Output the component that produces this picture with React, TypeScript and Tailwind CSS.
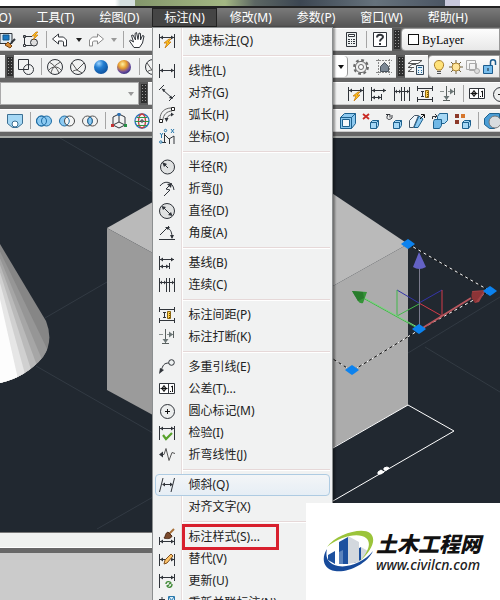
import React from "react";

const K = "#30343a";

const glyphs: Record<string, React.ReactNode> = {
  quick: (
    <>
      <path d="M.5 1v14M15.500 1v14M1 4.500h14" />
      <path d="M1 4.500l3-2v4zM15 4.500l-3-2v4z" fill={K} stroke="none" />
      <path d="M10 6l-5 4h3l-2 5 6-6H9l3-3z" fill="#ffc21a" stroke="#c87a10" strokeWidth=".8" />
    </>
  ),
  linear: (
    <>
      <path d="M.5 1v14M15.500 1v14M1 7.500h14" />
      <path d="M1 7.500l3-2v4zM15 7.500l-3-2v4z" fill={K} stroke="none" />
    </>
  ),
  aligned: (
    <>
      <path d="M4 5l9 8M0 5l5-5M10 16l6-6" />
      <path d="M2.500 3.500l4 1-2 2.500zM14 14l-4-1 2-2.500z" fill={K} stroke="none" />
    </>
  ),
  arc: (
    <>
      <path d="M4 13C4 8 8 4 13 4M1 12C1 5 6 1 12 1" stroke="#666" />
      <path d="M7.500 14c0-4 2-6 6-6.500" stroke="#555" />
      <path d="M.5 12.500h3v3h-3zM12.500 .5h3v3h-3z" fill="#fff" stroke="#222" />
      <path d="M5.500 11h4l-2 4zM12 5.500v4l3-2z" fill={K} stroke="none" />
    </>
  ),
  ordinate: (
    <>
      <path d="M5.500 4v10M3 13.500h4M6 6l4 4 5-3v8M10.500 10v5" />
      <path d="M1 4l1.500 2L4 4M2.500 6v3M12 0l3 4M15 0l-3 4" stroke="#2879ad" />
      <circle cx="6.500" cy="1.500" r="1.200" stroke="#2879ad" />
      <circle cx="1.800" cy="13" r="1.200" stroke="#2879ad" />
    </>
  ),
  radius: (
    <>
      <circle cx="8.500" cy="8" r="7" fill="#e0e2e2" />
      <path d="M9 9L5 5" />
      <path d="M3 3l5 2-3 3z" fill={K} stroke="none" />
    </>
  ),
  jogged: (
    <>
      <path d="M1 5C5-1 14 0 15 9M12 3L7 8l4 1-6 6" />
      <path d="M13 2l-1 5-4-4z" fill={K} stroke="none" />
    </>
  ),
  diameter: (
    <>
      <circle cx="8" cy="8" r="7.500" fill="#e0e2e2" />
      <path d="M4 4l8 8" />
      <path d="M2.500 3l4.500 1-3 3zM13.500 13l-4.500-1 3-3z" fill={K} stroke="none" />
    </>
  ),
  angular: (
    <>
      <path d="M0 14.500h16M1 10L10 1M8 3c4 1 5 5 5 10" />
      <path d="M6 2l5 0-2 3zM13 14l-2-4h4z" fill={K} stroke="none" />
    </>
  ),
  baseline: (
    <>
      <path d="M.5 1v14M10.500 8v6M1 4.500h14M1 11.500h9" />
      <path d="M1 4.500l3-2v4zM15 4.500l-3-2v4zM1 11.500l3-2v4zM10 11.500l-3-2v4z" fill={K} stroke="none" />
    </>
  ),
  cont: (
    <>
      <path d="M.5 1v14M7.500 1v14M10.500 1v14M15.500 1v14M1 5.500h14" />
      <path d="M1 5.500l2-2v4zM7 5.500l-2-2v4zM15 5.500l-2-2v4z" fill={K} stroke="none" />
    </>
  ),
  spacing: (
    <>
      <path d="M.5 0v5M15.500 0v5M.5 11v5M15.500 11v5M1 2.500h14M1 13.500h14M4 5.500h3M4 10.500h3M5.500 6v5" />
      <path d="M8.500 4.500h3v7h-3z" fill="#ffd04a" stroke="#8a6510" />
      <path d="M10 6.500h1M10 8.500h1M10 10.500h1" stroke="#704c00" />
    </>
  ),
  breakDim: (
    <>
      <path d="M0 5.500h4M8 5.500h7" stroke="#89908f" />
      <path d="M6.500 0v14M3 14.500h7M14.500 2v7" stroke="#59605f" />
      <path d="M14 5.500l-4-3v6zM6.500 14l-3-4h6z" fill="#6b7676" stroke="none" />
    </>
  ),
  leader: (
    <>
      <path d="M2 12C4 6 5 4 10 4" />
      <circle cx="12.500" cy="3.500" r="2.800" fill="#eef2f2" />
      <path d="M0 15l1-6 4 2z" fill={K} stroke="none" />
    </>
  ),
  tolerance: (
    <>
      <path d="M.5 2.500h15v10H.5zM9.500 3v9" fill="#fff" />
      <circle cx="5" cy="7.500" r="2" stroke="#111" />
      <path d="M5 4v7M1.500 7.500h7M12 6l1.500-1v6M11 10.500h1" stroke="#111" />
    </>
  ),
  center: (
    <>
      <circle cx="8.500" cy="8.500" r="7" fill="#eceeee" />
      <path d="M6 8.500h5M8.500 6v5" stroke="#111" />
    </>
  ),
  inspect: (
    <>
      <path d="M.5 1v14M15.500 1v14M1 3.500h14" />
      <path d="M1 3.500l3-2v4zM15 3.500l-3-2v4z" fill={K} stroke="none" />
      <path d="M4 10l3 4 6-6" stroke="#58a12c" strokeWidth="2.200" />
    </>
  ),
  jogLine: (
    <>
      <path d="M3 7.500h2l2-6 3 12 3-8 3 1" stroke="#555" />
      <path d="M0 7.500l4-3v6z" fill={K} stroke="none" />
    </>
  ),
  oblique: (
    <>
      <path d="M4 1L.5 15M15.500 1L12 15M4 7.500h9" />
      <path d="M3 7.500l3-2v4zM14 7.500l-3-2v4z" fill={K} stroke="none" />
    </>
  ),
  style: (
    <>
      <path d="M.5 8v8M15.500 8v8M1 12.500h14" />
      <path d="M1 12.500l3-2v4zM15 12.500l-3-2v4z" fill={K} stroke="none" />
      <path d="M15 0l-5 5" stroke="#a87038" strokeWidth="2" />
      <path d="M9 3l4 4c-1 3-5 3-8 2 2-2 1-5 4-6z" fill="#7b4a2c" stroke="#4c2b18" />
    </>
  ),
  override: (
    <>
      <path d="M.5 3v12M15.500 3v12M1 8.500h5M13 8.500h2" />
      <path d="M1 8.500l3-2v4zM15 8.500l-3-2v4z" fill={K} stroke="none" />
      <path d="M12 3l2 2-6 7-3 1 1-4z" fill="#ffc66b" stroke="#805020" />
    </>
  ),
  update: (
    <>
      <path d="M.5 1v14M15.500 1v7M1 4.500h14" />
      <path d="M1 4.500l3-2v4zM15 4.500l-3-2v4z" fill={K} stroke="none" />
      <path d="M7 11c0-3 4-3 5-1l-2 1M13 11c0 4-4 4-5 2l2-1" stroke="#438c3a" strokeWidth="1.400" />
    </>
  ),
  reassoc: (
    <>
      <path d="M0 4.500h6M3 2v5" />
      <path d="M9.500 1.500h6v8h-6zM10 2l5 7M15 2l-5 7" fill="#d9ecf8" stroke="#2879ad" />
    </>
  ),
  saveBrush: (
    <>
      <path d="M0 1.500h12v10H0z" fill="#dce9f2" />
      <path d="M3 3h6v5H3z" fill="#1979c4" stroke="#145785" />
      <path d="M15 7l-4 4" strokeWidth="2" />
      <path d="M8 10l4 4-2 2-5-3z" fill="#d78b35" stroke="#774616" />
    </>
  ),
  shapeFlash: (
    <>
      <path d="M1.500 4.500H9M1.500 5v7M2 13.500h7M.5 3.500h2v2h-2zM.5 12.500h2v2h-2z" />
      <circle cx="11" cy="10.500" r="3.500" fill="#ddd" />
      <path d="M13 0L9 4h3l-2 4 5-5h-3l3-3z" fill="#ffc21a" stroke="#c87a10" strokeWidth=".7" />
    </>
  ),
  undo: <path d="M.5 7l6-5v3h5l3 3v6h-3v-4l-1-1h-4v3z" fill="#fff" />,
  redo: <path d="M15.500 7l-6-5v3h-5l-3 3v6h3v-4l1-1h4v3z" fill="#fff" stroke="#8b8b8b" />,
  hand: (
    <path
      d="M5 15.500L.5 9 1.500 8l3 2-2-6.500L4 3l2.500 5L6 1.500 7.500.5l1.500 7 1-6.500 1.500.5V8l2-4.500 1.500.5-1.500 7-3 4.500z"
      fill="#fff"
    />
  ),
  calc: (
    <>
      <path d="M3.500.5h10v14h-10z" fill="#eef2f2" />
      <path d="M5.500 2.500h6v2h-6z" fill="#fff" />
      <path d="M5 7.500h2M8 7.500h1M10 7.500h2M5 9.500h2M8 9.500h1M10 9.500h2M5 11.500h2M8 11.500h1M10 11.500h2" />
    </>
  ),
  help: (
    <>
      <path d="M1.500.5h13v14h-13z" fill="#fff" />
      <path d="M5 5.500c0-3.500 6-3.500 6-.5 0 2-3 1.500-3 4.500M8 11v2" strokeWidth="2" />
    </>
  ),
  overlap: (
    <>
      <path d="M.5.5h10v10H.5z" />
      <circle cx="10.500" cy="10.500" r="5" />
    </>
  ),
  sphereX: (
    <>
      <circle cx="8" cy="8" r="7.500" />
      <path d="M2 3c4 2 8 6 10 11M14 3C9 5 5 9 4 14M2 11c3-4 9-4 12 0" stroke="#555" />
    </>
  ),
  sphereV: (
    <>
      <circle cx="8" cy="8" r="7.500" />
      <path d="M2 4l5 7 7-7M7 11c-2 0-4 1-5 2M7 11l5 3" stroke="#555" />
    </>
  ),
  ballBlue: <circle cx="8" cy="8" r="7" fill="url(#ballBlue)" stroke="none" />,
  ballGold: <circle cx="8" cy="8" r="7" fill="url(#ballGold)" stroke="none" />,
  gear: (
    <>
      <circle cx="8" cy="8" r="6.800" strokeWidth="2.200" strokeDasharray="2.800 2.540" stroke="#6a6a6a" />
      <circle cx="8" cy="8" r="5.600" fill="#eee" stroke="#6a6a6a" />
      <circle cx="8" cy="8" r="2.500" fill="#fff" stroke="#6a6a6a" />
    </>
  ),
  house: (
    <>
      <path d="M2.500 0v16M13.500 0v16M0 1.500h16M0 13.500h16" stroke="#888" strokeDasharray="2 1" />
      <path d="M4.500 12.500v-5l4-4 4 4v5z" fill="#7b8794" stroke="#48525c" />
    </>
  ),
  layers: (
    <>
      <path d="M4 1.500h10l-4 3H0zM4 5.500h4M4 5.500l-4 3h6M4 9.500l-4 3h6" fill="#fff" stroke="#555" />
      <path d="M8.500 6.500h7v9h-7z" fill="#e4f0f8" stroke="#345" />
      <path d="M10 8.500h4M10 11.500h1M13 11.500h1M10 13.500h1M13 13.500h1" stroke="#246b9c" />
    </>
  ),
  bulb: (
    <>
      <path d="M6 11C1 6 4 1.500 8 1.500s7 4.500 2 9.500z" fill="#ffe27a" stroke="#a87c25" />
      <path d="M6 12.500h4M6 14.500h4" stroke="#555" />
    </>
  ),
  sun: (
    <>
      <path d="M8 1v14M1 8h14M3 3l10 10M13 3L3 13" stroke="#6c6040" />
      <circle cx="8" cy="8" r="4" fill="#ffe59a" stroke="#a98232" />
    </>
  ),
  frozen: (
    <>
      <path d="M1.500 1.500h9v9h-9zM4.500 4.500h7v7h-7z" stroke="#aaa" />
      <circle cx="12" cy="12" r="2.500" fill="#ddd" stroke="#aaa" />
    </>
  ),
  lock: (
    <>
      <path d="M1.500 6.500h9v8h-9z" fill="#78bdec" stroke="#1c5c8e" />
      <path d="M8.500 6V3c0-3 5-3 5 0v3" stroke="#1c5c8e" strokeWidth="1.500" />
      <path d="M6 9v3" stroke="#123" />
    </>
  ),
  pocket: (
    <>
      <path d="M.5 1.500h15v9l-5 4h-5l-5-4z" fill="#a6d8f5" stroke="#3b6f93" />
      <circle cx="8" cy="11" r="3" fill="#fff" stroke="#3b6f93" />
    </>
  ),
  union: (
    <>
      <circle cx="5.500" cy="8" r="5" fill="#8ccaf2" stroke="#1e6ca4" />
      <circle cx="10.500" cy="8" r="5" fill="#8ccaf2" stroke="#1e6ca4" />
      <circle cx="5.500" cy="8" r="5" stroke="#1e6ca4" />
    </>
  ),
  subtract: (
    <>
      <circle cx="5.500" cy="8" r="5" fill="#8ccaf2" stroke="#1e6ca4" />
      <circle cx="10.500" cy="8" r="5" fill="#f4f5f5" stroke="#444" />
      <path d="M8 4c3 2 3 6 0 8" stroke="#1e6ca4" />
    </>
  ),
  intersect: (
    <>
      <circle cx="5.500" cy="8" r="5" stroke="#555" />
      <circle cx="10.500" cy="8" r="5" stroke="#555" />
      <path d="M8 4c3 2 3 6 0 8-3-2-3-6 0-8z" fill="#8ccaf2" stroke="#1e6ca4" />
    </>
  ),
  hexAxis: (
    <>
      <path d="M8 1l6 3v8l-6 3-6-3V4zM8 1v8M8 9l-6 3M8 9l6 3" />
      <path d="M6.500 0h3v3h-3z" fill="#2b72b8" stroke="none" />
      <path d="M0 11h3v3H0z" fill="#c43333" stroke="none" />
      <path d="M13 11h3v3h-3z" fill="#268e45" stroke="none" />
    </>
  ),
  globe: (
    <>
      <circle cx="8" cy="8" r="7" stroke="#2872b8" strokeWidth="1.300" />
      <ellipse cx="8" cy="8" rx="3.500" ry="7" stroke="#c83c3c" strokeWidth="1.300" />
      <path d="M1 8.500h14M3 4.500h10M3 12.500h10" stroke="#2d9645" />
      <path d="M7 7h2v2H7z" fill="#fff" />
    </>
  ),
  boxes: (
    <>
      <path d="M.5 4.500l4-4h11v10l-4 5H.5z" fill="#8cc8ef" stroke="#1d618f" />
      <path d="M.5 4.500h11v11M11.500 4.500l4-4" stroke="#1d618f" />
      <path d="M2.500 6.500h7v7h-7z" fill="#f5f8fa" stroke="#1d618f" />
    </>
  ),
  boxX: (
    <>
      <path d="M0 1l6 5M6 1L0 6" stroke="#c92b25" strokeWidth="1.800" />
      <path d="M7.500 9.500l2-2h6v5l-2 3h-6zM7.500 9.500h6v6M13.500 9.500l2-2" fill="#a5d7f5" stroke="#1d618f" />
    </>
  ),
  boxTurn: (
    <>
      <path d="M2 1.500C-1 6 3 8 6 5V2M0 1.500h4v3" />
      <path d="M7.500 9.500l2-2h6v5l-2 3h-6zM7.500 9.500h6v6M13.500 9.500l2-2" fill="#a5d7f5" stroke="#1d618f" />
    </>
  ),
  taper: (
    <>
      <path d="M.5 14.500v-7l5-5h4l-5 12z" fill="#eef5fa" stroke="#456" />
      <path d="M5 14.500L10 3l4 3-5 8.500z" fill="#8ccaf2" stroke="#1d618f" />
      <path d="M15.500 5V1.500H12M15 2l-4 4" stroke="#111" />
    </>
  ),
  copyFace: (
    <>
      <path d="M5.500 3.500l2-3h8v7l-3 3h-7z" fill="#a5d7f5" stroke="#1d618f" />
      <path d="M1.500 8.500l1-2h7v6l-2 3h-6z" fill="#71b8e6" stroke="#1d618f" />
      <path d="M.5 6V3.500H4M3 1l2 2-2 2" />
    </>
  ),
  colorBox: (
    <>
      <path d="M0 1h4v4H0zM0 7h4v4H0z" fill="#8d3a2a" stroke="none" />
      <path d="M6 1h4v4H6z" fill="#d6762c" stroke="none" />
      <path d="M7.500 9.500l2-2h6v5l-2 3h-6zM7.500 9.500h6v6M13.500 9.500l2-2" fill="#a5d7f5" stroke="#1d618f" />
    </>
  ),
  solid: (
    <>
      <path d="M.5 5.500l5-5h10v10l-5 5h-5l-5-4z" fill="#4b9ed6" stroke="#1d618f" />
      <circle cx="11" cy="9" r="6" fill="#d8dcdf" stroke="#777" />
    </>
  ),
};

function Icon({ name }: { name: string }) {
  return (
    <svg
      viewBox="0 0 16 16"
      className="h-4 w-4 shrink-0 overflow-visible"
      fill="none"
      stroke={K}
      strokeWidth="1"
      aria-hidden="true"
    >
      {glyphs[name]}
    </svg>
  );
}

function Tool({ name }: { name: string }) {
  return (
    <button type="button" aria-label={name} className="flex w-[23px] shrink-0 items-center pl-[3px]">
      <Icon name={name} />
    </button>
  );
}

function Tools({ names }: { names: string[] }) {
  return (
    <>
      {names.map((n, i) =>
        n === "|" ? (
          <span key={i} className="flex h-full w-[6px] shrink-0 justify-center py-0.5">
            <span className="w-px bg-[#a5a5a5]" />
          </span>
        ) : (
          <Tool key={i} name={n} />
        )
      )}
    </>
  );
}

function Arrow({ className }: { className: string }) {
  return (
    <svg viewBox="0 0 6 4" className={`h-1 w-1.5 shrink-0 ${className}`} fill="currentColor" aria-hidden="true">
      <path d="M0 0h6L3 4z" />
    </svg>
  );
}

function Drop({ label, className }: { label: string; className: string }) {
  return (
    <button type="button" aria-label={label} className={`flex h-full shrink-0 items-center justify-center ${className}`}>
      <Arrow className="" />
    </button>
  );
}

function Grip() {
  return (
    <span className="flex w-[9px] shrink-0 justify-center bg-[#5a5a5a] py-0.5">
      <span className="w-[6px] bg-[#2e2e2e] bg-[radial-gradient(#999_30%,transparent_35%)] bg-[length:3px_3px]" />
    </span>
  );
}

const panel = "flex h-full shrink-0 items-center border-y border-t-white border-b-[#c9c9c9] bg-[#f1f2f2]";
const row = "flex h-[23px] shrink-0 overflow-hidden";

const menu: [string, string][][] = [
  [["quick", "快速标注(Q)"]],
  [["linear", "线性(L)"], ["aligned", "对齐(G)"], ["arc", "弧长(H)"], ["ordinate", "坐标(O)"]],
  [["radius", "半径(R)"], ["jogged", "折弯(J)"], ["diameter", "直径(D)"], ["angular", "角度(A)"]],
  [["baseline", "基线(B)"], ["cont", "连续(C)"]],
  [["spacing", "标注间距(P)"], ["breakDim", "标注打断(K)"]],
  [
    ["leader", "多重引线(E)"],
    ["tolerance", "公差(T)..."],
    ["center", "圆心标记(M)"],
    ["inspect", "检验(I)"],
    ["jogLine", "折弯线性(J)"],
  ],
  [["oblique", "倾斜(Q)"], ["", "对齐文字(X)"]],
  [["style", "标注样式(S)..."], ["override", "替代(V)"], ["update", "更新(U)"], ["reassoc", "重新关联标注(N)"]],
];

function Dropdown() {
  return (
    <div
      role="menu"
      className="absolute top-full left-0 z-10 w-[181px] border-x border-t border-[#8c8f90] bg-[linear-gradient(90deg,#f1f2f2_28px,#e6dcdc_28px,#e6dcdc_29px,#fff_29px,#fff_30px,#f1f2f2_30px)] px-0.5 pt-0.5 text-[#222] shadow-[2px_0_2px_#0006]"
    >
      {menu.map((group, g) => (
        <div key={g}>
          {g > 0 && (
            <div className="flex h-2 items-center pl-7">
              <div className="h-0.5 w-full border-t border-[#e6d8d8] bg-white" />
            </div>
          )}
          {group.map(([icon, label]) => (
            <button
              key={label}
              type="button"
              role="menuitem"
              className={`flex h-[22px] w-full items-center rounded-sm border pl-[3px] text-left text-[12px] leading-[20px] whitespace-nowrap ${
                icon === "oblique"
                  ? "border-[#aecbe2] bg-[linear-gradient(#f3f5f7,#e6eef5)]"
                  : "border-transparent"
              }`}
            >
              <span className="flex w-[23px] shrink-0">{icon && <Icon name={icon} />}</span>
              <span className="relative pl-[6px]">
                {label}
                {icon === "style" && (
                  <span className="absolute -top-[3px] left-0 h-[26px] w-[97px] border-3 border-[#d8202e]" />
                )}
              </span>
            </button>
          ))}
        </div>
      ))}
    </div>
  );
}

function Diamond({ x, y }: { x: number; y: number }) {
  return <path d={`M${x - 7} ${y}l4-3 3-2 3 2 4 3-4 3-3 2-3-2z`} fill="#0c82ee" />;
}

function Drawing() {
  return (
    <svg
      viewBox="0 138 500 394"
      preserveAspectRatio="xMinYMin slice"
      className="min-h-0 w-full flex-1 bg-[#212830]"
      fill="none"
      aria-hidden="true"
    >
      <defs>
        <radialGradient id="ballBlue" cx=".35" cy=".25" r=".8">
          <stop offset="0" stopColor="#9bd3ff" />
          <stop offset=".4" stopColor="#247fd2" />
          <stop offset="1" stopColor="#0c4f9c" />
        </radialGradient>
        <radialGradient id="ballGold" cx=".4" cy=".3" r=".75">
          <stop offset="0" stopColor="#fff0a0" />
          <stop offset=".4" stopColor="#e59a2c" />
          <stop offset=".75" stopColor="#6a4aa0" />
          <stop offset="1" stopColor="#2a2c70" />
        </radialGradient>
        <clipPath id="cone">
          <path d="M0 244l46 77q8 20-3 36-17 20-43 26z" />
        </clipPath>
      </defs>
      <g stroke="#323a43">
        <path d="M60 138l93 54M45 318l62-36M36 366l117 67M97 529l56-32M425 347l75 45M408 353l92-56" />
      </g>
      <g clipPath="url(#cone)">
        <path d="M0 230h60v160H0z" fill="#868686" />
        <path d="M-20 210L50 355 30 390H-20z" fill="#969696" />
        <path d="M-20 210L45 367 30 390H-20z" fill="#a6a6a6" />
        <path d="M-20 210L40 374 30 390H-20z" fill="#bababa" />
        <path d="M-20 210L34 379 30 390H-20z" fill="#d0d0d0" />
        <path d="M-20 210L28 385 20 390H-20z" fill="#e6e6e6" />
        <path d="M-20 210L20 388 15 390H-20z" fill="#fdfdfd" />
      </g>
      <path d="M107 228l150-85 151 101-134 75z" fill="#bababa" />
      <path d="M107 228l167 91v162l-167-91z" fill="#9b9b9b" />
      <path d="M274 319l134-75v161l-134 76z" fill="#acacac" />
      <path d="M333 448l75-43 46 26-121 70" stroke="#fff" />
      <path d="M378 472l3-2 3 2-3 2h-3zM384 468l3-1 2 1-2 2h-3z" fill="#fff" stroke="#fff" />
      <path d="M408 244l82 47-71 39-67 41-19-12" stroke="#111" />
      <path d="M408 244l82 47-71 39-67 41-19-12" stroke="#fff" strokeDasharray="3 3" />
      <path d="M397 290l22 13 23-13" stroke="#3434a8" />
      <path d="M397 290v26l22-12M419 329l-56-31" stroke="#43b84a" />
      <path d="M419 328l-56-31" stroke="#7bd580" />
      <path d="M442 290v26l-23-13" stroke="#d33a48" />
      <path d="M421 329l50-31" stroke="#b8565d" strokeWidth="2" />
      <path d="M419.500 329v-64" stroke="#7b7b8d" />
      <path d="M419 252l7 15q-7 4-13 0z" fill="#6462c5" />
      <path d="M352 291l15 1-4 11q-3 1-5-2z" fill="#359438" />
      <path d="M352 291l11 1 1 6-6 3z" fill="#287c2c" />
      <path d="M486 290l-14 1 3 12 4-1z" fill="#a34346" />
      <path d="M472 292q-2 6 3 11l9-12z" fill="#8c3437" />
      <Diamond x={408} y={244} />
      <Diamond x={490} y={291} />
      <Diamond x={419} y={329} />
      <Diamond x={352} y={370} />
    </svg>
  );
}

const barItem = "flex h-[19px] items-center px-3 text-[12px] leading-[18px] whitespace-nowrap text-white";

export default function App() {
  return (
    <div className="relative flex h-screen w-full flex-col overflow-hidden bg-[#666] font-['Noto_Sans','Noto_Sans_CJK_SC',sans-serif]">
      <div className="h-[6px] shrink-0 bg-[linear-gradient(90deg,#fff_23%,#d5dfdf_24%,#d5dfdf_27%,#83966b_27%,#a3b783_45%,#5c6663_51%,#3c4652_60%,#66727c_75%,#4b5563_89%,#c8c8dc_89%,#c8c8dc_92%,#fff_92%)]" />
      <nav className="flex h-[21px] shrink-0 gap-px border-t-2 border-[#222] bg-[linear-gradient(#7a7a7a,#545454)]">
        <button type="button" className={`${barItem} -ml-[41px]`}>格式(O)</button>
        <button type="button" className={barItem}>工具(T)</button>
        <button type="button" className={barItem}>绘图(D)</button>
        <div className="relative">
          <button type="button" className={`${barItem} bg-[#454545] outline -outline-offset-1 outline-[#222]`}>
            标注(N)
          </button>
          <Dropdown />
        </div>
        <button type="button" className={barItem}>修改(M)</button>
        <button type="button" className={barItem}>参数(P)</button>
        <button type="button" className={barItem}>窗口(W)</button>
        <button type="button" className={barItem}>帮助(H)</button>
      </nav>

      <div className="flex shrink-0 flex-col gap-1 border-b-2 border-[#a5a8a5] pt-px pb-1">
        <div className={row}>
          <div className={`${panel} -ml-[3px]`}>
            <Tools names={["saveBrush", "shapeFlash", "|", "undo"]} />
            <Drop label="undo list" className="w-[13px] text-[#222]" />
            <Tool name="redo" />
            <Drop label="redo list" className="w-3 text-[#999]" />
            <Tools names={["|", "hand"]} />
            <span className="w-[191px]" />
            <Tools names={["calc", "|", "help"]} />
          </div>
          <Grip />
          <label className="relative flex min-w-0 flex-1 items-center rounded-l-sm border border-[#999] bg-[linear-gradient(#fdfdfd,#e8e8e8)]">
            <span className="absolute left-[6px] h-[11px] w-[11px] border border-[#111] bg-white" />
            <select
              aria-label="Color"
              className="h-full w-full appearance-none pl-5 font-['Liberation_Serif',serif] text-[12px] text-black"
            >
              <option>ByLayer</option>
            </select>
          </label>
        </div>

        <div className={row}>
          <div className={`${panel} w-[5px]`} />
          <Grip />
          <div className={`${panel} pl-px`}>
            <Tools names={["overlap", "|", "sphereX", "sphereV", "ballBlue", "ballGold", "|", "sphereV"]} />
            <span className="w-[170px]" />
            <Drop label="visual style list" className="w-[13px] rounded-r-sm border-r border-[#999] bg-white text-[#111]" />
            <span className="w-0.5" />
            <Tools names={["gear", "house"]} />
          </div>
          <Grip />
          <div className={panel}>
            <Tool name="layers" />
          </div>
          <div className="flex min-w-0 flex-1 items-center gap-px rounded-l border border-[#999] bg-[linear-gradient(#fdfdfd,#e8e8e8)] pl-0.5">
            <Icon name="bulb" />
            <Icon name="sun" />
            <Icon name="frozen" />
            <Icon name="lock" />
          </div>
        </div>

        <div className={row}>
          <label className="relative flex w-[139px] shrink-0 items-center border border-[#aaa] bg-[#f3f5f3]">
            <select aria-label="Named views" className="h-full w-full appearance-none">
              <option></option>
            </select>
            <Arrow className="pointer-events-none absolute right-1 text-[#999]" />
          </label>
          <Grip />
          <div className={panel}>
            <span className="w-[197px]" />
            <Tools names={["quick", "baseline", "cont", "spacing", "breakDim", "|", "tolerance", "center"]} />
          </div>
        </div>

        <div className={row}>
          <div className={`${panel} pl-1`}>
            <Tools names={["pocket", "|", "union", "subtract", "intersect", "|", "hexAxis", "globe"]} />
            <span className="w-[183px]" />
            <Tools names={["boxes", "boxX", "boxTurn", "taper", "copyFace", "colorBox", "|", "solid"]} />
          </div>
        </div>
      </div>

      <Drawing />
      <div className="h-4 shrink-0 border-t border-b border-t-[#777] border-b-white bg-[#f0f2f0]" />
      <div className="h-[5px] shrink-0 bg-[#686868]" />
      <div className="h-[47px] shrink-0 bg-[#cbcbcb]" />

      <div className="absolute right-0 bottom-0 z-20 flex h-[97px] w-[194px] items-center bg-white pl-4">
        <svg viewBox="0 0 54 44" className="h-11 w-[54px] shrink-0" aria-hidden="true">
          <path d="M17 12l9-5v27h-9zM6 25l7-4v13L6 30zM32 21l7-4v13l-7 3z" fill="#1d519f" />
          <path d="M26 6l11 6v20l-11 2zM39 17l7 4-7 9z" fill="#d3d8de" />
          <path d="M17 22l4-2v14h-4z" fill="#5c84bd" />
          <path d="M5 17C14 4 40-3 48 3c7 6 2 17-10 28C46 22 50 13 44 8 37 2 18 6 5 17z" fill="#9bc43b" />
          <path d="M5 19C-1 28 1 39 13 41c13 2 32-7 38-20-9 11-24 17-35 15C6 34 3 28 5 19z" fill="#174a9a" />
        </svg>
        <div className="flex flex-col whitespace-nowrap italic">
          <span className="h-[26px] font-['Noto_Sans_CJK_SC',sans-serif] text-[21px] leading-[26px] font-black text-[#111]">
            土木工程网
          </span>
          <span className="font-['Noto_Sans',sans-serif] text-[14px] leading-[18px] font-medium text-[#222]">
            www.civilcn.com
          </span>
        </div>
      </div>
    </div>
  );
}
